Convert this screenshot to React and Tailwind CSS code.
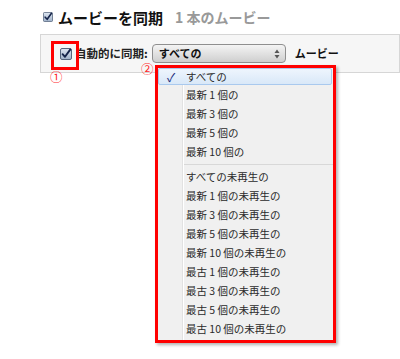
import React from "react";

function Check({ size = 12 }) {
  return (
    <svg width={size} height={size} viewBox="0 0 12 12" className="shrink-0">
      <defs>
        <linearGradient id={"cg" + size} x1="0" y1="0" x2="0" y2="1">
          <stop offset="0" stopColor="#dfe7f2" />
          <stop offset="1" stopColor="#9fb1c9" />
        </linearGradient>
      </defs>
      <rect x="0.5" y="0.5" width="11" height="11" rx="1.5" fill={"url(#cg" + size + ")"} stroke="#56657d" />
      <path d="M2.6 6.2 L5 8.8 L10.2 1.6" fill="none" stroke="#15244a" strokeWidth="1.9" strokeLinecap="round" strokeLinejoin="round" />
    </svg>
  );
}

const group1 = ["最新 1 個の", "最新 3 個の", "最新 5 個の", "最新 10 個の"];
const group2 = [
  "すべての未再生の",
  "最新 1 個の未再生の",
  "最新 3 個の未再生の",
  "最新 5 個の未再生の",
  "最新 10 個の未再生の",
  "最古 1 個の未再生の",
  "最古 3 個の未再生の",
  "最古 5 個の未再生の",
  "最古 10 個の未再生の",
];

function Item({ children }) {
  return (
    <div className="h-[19px] flex items-center pl-[28px] text-[10.5px] text-[#2a2a2a]">{children}</div>
  );
}

export default function App() {
  return (
    <div
      className="relative w-[400px] h-[359px] bg-white overflow-hidden"
      style={{ fontFamily: '"Noto Sans CJK JP", "Noto Sans", sans-serif' }}
    >
      <div className="flex items-center gap-[5px] pl-[43px] pt-[8px] h-[26px]">
        <Check size={10} />
        <span className="text-[15px] font-bold text-[#111] leading-none">ムービーを同期</span>
        <span className="ml-[7px] text-[14px] font-bold text-[#999] leading-none">1 本のムービー</span>
      </div>

      <div className="ml-[40px] mt-[8px] h-[39px] border border-[#d6d6d6] bg-[#f6f6f6] flex items-center pl-[19px]">
        <Check size={12} />
        <span className="ml-[3px] text-[11.5px] font-bold text-[#222]">自動的に同期:</span>
        <div className="ml-[4px] w-[134px] h-[19px] rounded-[4px] border border-[#8f8f8f] bg-gradient-to-b from-[#f4f4f4] to-[#cfcfcf] flex items-center pl-[6px] pr-[5px]">
          <span className="text-[11px] font-bold text-[#111] flex-1">すべての</span>
          <svg width="6" height="10" viewBox="0 0 6 10">
            <path d="M3 0.5 L5.5 4 L0.5 4 Z" fill="#555" />
            <path d="M3 9.5 L5.5 6 L0.5 6 Z" fill="#555" />
          </svg>
        </div>
        <span className="ml-[9px] text-[11px] font-bold text-[#111]">ムービー</span>
      </div>

      {/* annotation 1 */}
      <div className="absolute left-[51px] top-[41px] w-[28px] h-[29px] border-[3px] border-[#ff0000]" />
      <div className="absolute left-[50px] top-[71px] text-[12.5px] leading-none text-[#ff2a2a]">①</div>
      <div className="absolute left-[141px] top-[63px] text-[12.5px] leading-none text-[#ff2a2a]">②</div>

      {/* popup menu */}
      <div className="absolute left-[155px] top-[65px] w-[181px] h-[278px] border-[3px] border-[#ff0000] bg-[#f0f0f0] shadow-[2px_2px_3px_rgba(0,0,0,0.3)]">
        <div className="relative h-full">
          <div className="absolute left-[24px] top-0 bottom-0 w-px bg-[#e2e2e2]" />
          <div className="absolute left-[25px] top-0 bottom-0 w-px bg-white" />
          <div className="relative h-[17px] mr-[1px] rounded-[2px] border border-[#a9c9ee] bg-gradient-to-b from-[#eef5fd] to-[#d9e8f8] flex items-center">
            <span className="w-[24px] text-center text-[12px] text-[#1b2a7a] leading-none">✓</span>
            <span className="pl-[3px] text-[10.5px] text-[#2a2a2a]">すべての</span>
          </div>
          <div className="relative">
            {group1.map((t) => (
              <Item key={t}>{t}</Item>
            ))}
            <div className="h-[6px] flex items-center pl-[26px]">
              <div className="w-full h-px bg-[#d8d8d8]" />
            </div>
            {group2.map((t) => (
              <Item key={t}>{t}</Item>
            ))}
          </div>
        </div>
      </div>
    </div>
  );
}
